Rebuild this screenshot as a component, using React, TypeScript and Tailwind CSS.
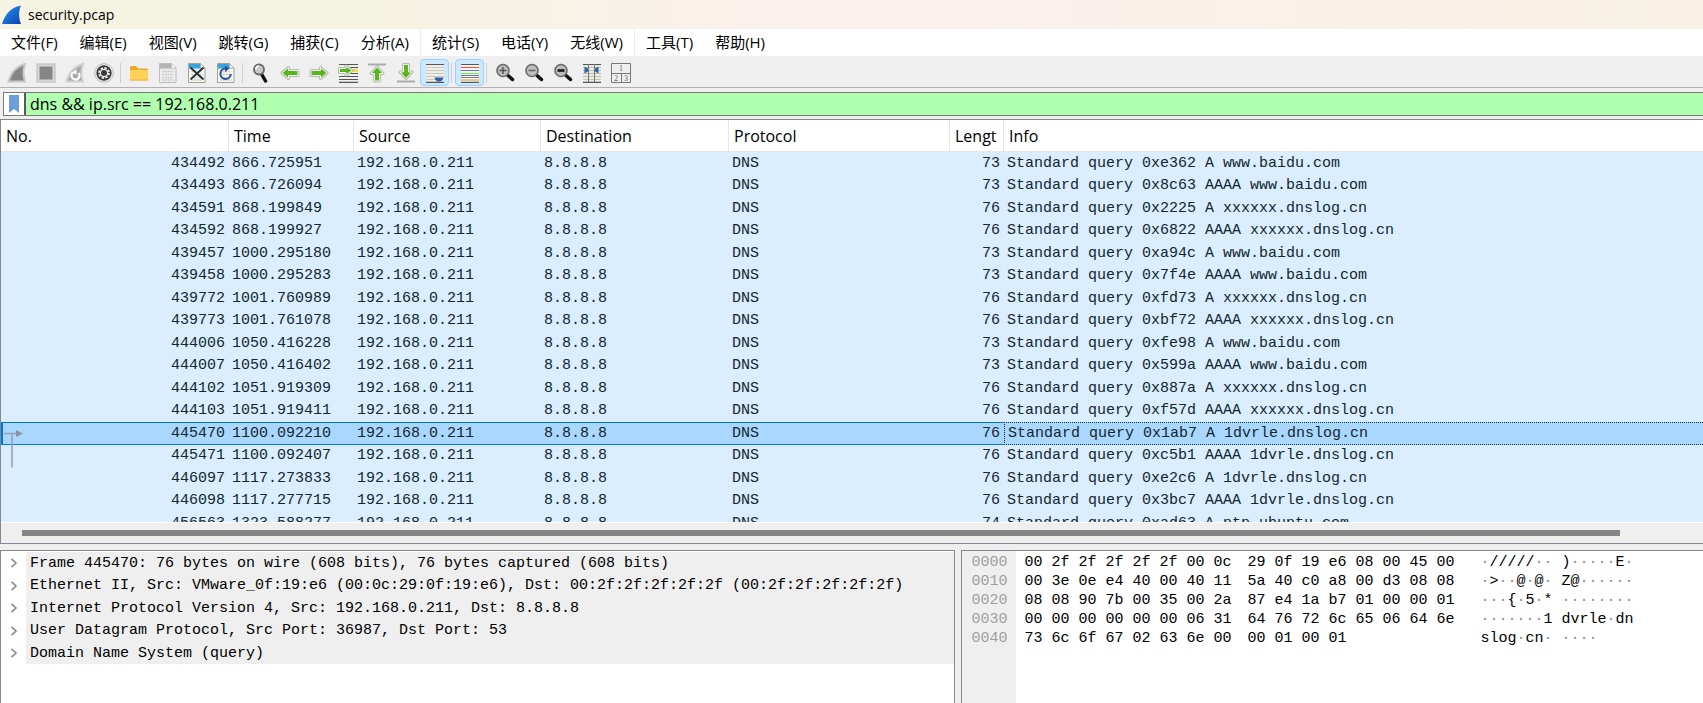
import { ReactNode } from 'react'
import clsx from 'clsx'

interface Packet {
    no: number
    time: string
    length: number
    info: string
}

const MENUS = [
    { label: '文件(F)' },
    { label: '编辑(E)' },
    { label: '视图(V)' },
    { label: '跳转(G)' },
    { label: '捕获(C)' },
    { label: '分析(A)', divider: true },
    { label: '统计(S)' },
    { label: '电话(Y)' },
    { label: '无线(W)', divider: true },
    { label: '工具(T)' },
    { label: '帮助(H)' },
]

const PACKETS: Packet[] = [
    { no: 434492, time: '866.725951', length: 73, info: 'Standard query 0xe362 A www.baidu.com' },
    { no: 434493, time: '866.726094', length: 73, info: 'Standard query 0x8c63 AAAA www.baidu.com' },
    { no: 434591, time: '868.199849', length: 76, info: 'Standard query 0x2225 A xxxxxx.dnslog.cn' },
    { no: 434592, time: '868.199927', length: 76, info: 'Standard query 0x6822 AAAA xxxxxx.dnslog.cn' },
    { no: 439457, time: '1000.295180', length: 73, info: 'Standard query 0xa94c A www.baidu.com' },
    { no: 439458, time: '1000.295283', length: 73, info: 'Standard query 0x7f4e AAAA www.baidu.com' },
    { no: 439772, time: '1001.760989', length: 76, info: 'Standard query 0xfd73 A xxxxxx.dnslog.cn' },
    { no: 439773, time: '1001.761078', length: 76, info: 'Standard query 0xbf72 AAAA xxxxxx.dnslog.cn' },
    { no: 444006, time: '1050.416228', length: 73, info: 'Standard query 0xfe98 A www.baidu.com' },
    { no: 444007, time: '1050.416402', length: 73, info: 'Standard query 0x599a AAAA www.baidu.com' },
    { no: 444102, time: '1051.919309', length: 76, info: 'Standard query 0x887a A xxxxxx.dnslog.cn' },
    { no: 444103, time: '1051.919411', length: 76, info: 'Standard query 0xf57d AAAA xxxxxx.dnslog.cn' },
    { no: 445470, time: '1100.092210', length: 76, info: 'Standard query 0x1ab7 A 1dvrle.dnslog.cn' },
    { no: 445471, time: '1100.092407', length: 76, info: 'Standard query 0xc5b1 AAAA 1dvrle.dnslog.cn' },
    { no: 446097, time: '1117.273833', length: 76, info: 'Standard query 0xe2c6 A 1dvrle.dnslog.cn' },
    { no: 446098, time: '1117.277715', length: 76, info: 'Standard query 0x3bc7 AAAA 1dvrle.dnslog.cn' },
    { no: 456563, time: '1323.588277', length: 74, info: 'Standard query 0xad63 A ntp.ubuntu.com' },
]

const SELECTED = 445470

const COLUMNS = ['No.', 'Time', 'Source', 'Destination', 'Protocol', 'Lengt', 'Info']

const DETAILS = [
    'Frame 445470: 76 bytes on wire (608 bits), 76 bytes captured (608 bits)',
    'Ethernet II, Src: VMware_0f:19:e6 (00:0c:29:0f:19:e6), Dst: 00:2f:2f:2f:2f:2f (00:2f:2f:2f:2f:2f)',
    'Internet Protocol Version 4, Src: 192.168.0.211, Dst: 8.8.8.8',
    'User Datagram Protocol, Src Port: 36987, Dst Port: 53',
    'Domain Name System (query)',
]

const HEX = [
    { offset: '0000', left: '00 2f 2f 2f 2f 2f 00 0c', right: '29 0f 19 e6 08 00 45 00', ascii: '·/////·· )·····E·' },
    { offset: '0010', left: '00 3e 0e e4 40 00 40 11', right: '5a 40 c0 a8 00 d3 08 08', ascii: '·>··@·@· Z@······' },
    { offset: '0020', left: '08 08 90 7b 00 35 00 2a', right: '87 e4 1a b7 01 00 00 01', ascii: '···{·5·* ········' },
    { offset: '0030', left: '00 00 00 00 00 00 06 31', right: '64 76 72 6c 65 06 64 6e', ascii: '·······1 dvrle·dn' },
    { offset: '0040', left: '73 6c 6f 67 02 63 6e 00', right: '00 01 00 01', ascii: 'slog·cn· ····' },
]

function Icon({ children }: { children: ReactNode }) {
    return (
        <svg width="20" height="20" viewBox="0 0 20 20" fill="none" aria-hidden="true">
            {children}
        </svg>
    )
}

function Sheet({ header, edge = '#a2a298', paper = '#f8f8ee' }: { header: string; edge?: string; paper?: string }) {
    return (
        <>
            <path d="M1.500 .5h12l4.500 4.500v14.500h-16.500z" fill={paper} stroke={edge} />
            <path d="M2 1h11.500l3 3v1.500H2z" fill={header} />
            <path d="M13.500 .5v4.500h4.500z" fill="#fff" stroke={edge} strokeWidth=".7" />
            <path d="M4.500 8.500h11M4.500 11.500h11M4.500 14.500h11M4.500 17h11" stroke="#c4c4c0" strokeWidth="1.600" strokeDasharray="1.600 1" />
        </>
    )
}

function Lens({ sign }: { sign: 'plus' | 'minus' | 'reset' }) {
    return (
        <Icon>
            <path d="M13 12.500l4.500 4" stroke="#111" strokeWidth="3.500" strokeLinecap="round" />
            <circle cx="8" cy="7.500" r="6" fill="#bdbdbd" stroke="#6a6a6a" strokeWidth="1.600" />
            {sign === 'plus' && <path d="M8 4v7M4.500 7.500h7" stroke="#555" strokeWidth="1.500" />}
            {sign === 'minus' && <path d="M4.500 7.500h7" stroke="#666" strokeWidth="1.500" />}
            {sign === 'reset' && <path d="M4.500 7.500h7" stroke="#222" strokeWidth="2.800" />}
        </Icon>
    )
}

function Arrow({ d }: { d: string }) {
    return (
        <>
            <path d={d} fill="#b9bcb4" stroke="#b9bcb4" strokeWidth="3" strokeLinejoin="round" />
            <path d={d} fill="#58b51c" stroke="#f2f7ee" strokeWidth="1" strokeLinejoin="round" />
        </>
    )
}

const FIN = 'M1.500 18.500C3.500 12 8 3.500 18 1c-2 5-2 11.500 0 17.500z'

const TOOLS: { label: string; icon?: ReactNode; pressed?: boolean }[] = [
    {
        label: '开始捕获',
        icon: (
            <Icon>
                <path d={FIN} fill="#858585" stroke="#c6c6c6" strokeWidth="2" />
            </Icon>
        ),
    },
    {
        label: '停止捕获',
        icon: (
            <Icon>
                <rect x="1" y="1" width="18" height="18" fill="#d8d8d8" stroke="#b9b9b9" />
                <rect x="3.500" y="3.500" width="13" height="13" fill="#868686" />
            </Icon>
        ),
    },
    {
        label: '重新开始捕获',
        icon: (
            <Icon>
                <path d={FIN} fill="#a9a9a9" stroke="#cfcfcf" strokeWidth="2" />
                <path d="M8 9.500a4 4 0 1 0 5.500 .5" stroke="#fff" strokeWidth="2.200" />
                <path d="M11.500 6.500v5l-4.500-2z" fill="#fff" />
            </Icon>
        ),
    },
    {
        label: '捕获选项',
        icon: (
            <Icon>
                <circle cx="10" cy="10" r="9.300" fill="#f5f5f5" stroke="#b5b5b5" />
                <circle cx="10" cy="10" r="7.700" fill="#3a3a3a" />
                <circle cx="10" cy="10" r="5" stroke="#eee" strokeWidth="1.800" strokeDasharray="2.300 1.600" />
                <circle cx="10" cy="10" r="4.200" fill="#eee" />
                <circle cx="10" cy="10" r="3" fill="#3a3a3a" />
            </Icon>
        ),
    },
    { label: '|' },
    {
        label: '打开',
        icon: (
            <Icon>
                <path d="M1 4.500q0-1.500 1.500-1.500h4.500l2 2.500h8.500q1.500 0 1.500 1.500v10H1z" fill="#e9a926" />
                <path d="M1 7h18v10.500H1z" fill="#ffd257" />
                <path d="M1 17h18" stroke="#eab83d" />
            </Icon>
        ),
    },
    { label: '保存', icon: <Icon><Sheet header="#b4b4b4" edge="#bcbcbc" paper="#ededed" /></Icon> },
    {
        label: '关闭',
        icon: (
            <Icon>
                <Sheet header="#38a6dd" />
                <path d="M4 5l12 11M16 5l-12 11" stroke="#24303a" strokeWidth="1.800" strokeLinecap="round" />
            </Icon>
        ),
    },
    {
        label: '重新加载',
        icon: (
            <Icon>
                <Sheet header="#38a6dd" />
                <path d="M9.500 5.500a5.200 5.200 0 1 0 5.300 5.500" stroke="#2452a0" strokeWidth="2" />
                <path d="M9 2.500l4.500 3L9 9z" fill="#2452a0" />
            </Icon>
        ),
    },
    { label: '|' },
    {
        label: '查找分组',
        icon: (
            <Icon>
                <path d="M10.500 11l4 7" stroke="#111" strokeWidth="3.500" strokeLinecap="round" />
                <circle cx="8" cy="6.500" r="5" fill="#c9c9c9" stroke="#666" strokeWidth="1.800" />
                <path d="M5 6a3 3 0 0 1 3-3" stroke="#fff" strokeWidth="1.500" />
            </Icon>
        ),
    },
    { label: '上一分组', icon: <Icon><Arrow d="M2 10l6.500-5.500v3h9.500v5H8.500v3z" /></Icon> },
    { label: '下一分组', icon: <Icon><Arrow d="M18 10l-6.500-5.500v3H2v5h9.500v3z" /></Icon> },
    {
        label: '转到分组',
        icon: (
            <Icon>
                <path d="M1 1.500h19M12 4.500h8M12 10.500h8M1 13.500h19M1 16.500h19M1 19.300h19" stroke="#555" strokeWidth="1.200" />
                <path d="M13 7.500h7" stroke="#fbdc3b" strokeWidth="3" />
                <Arrow d="M14 7.500l-6-4.500v2.500H1.500v4H8V12z" />
            </Icon>
        ),
    },
    {
        label: '首个分组',
        icon: (
            <Icon>
                <path d="M1 1.500h18" stroke="#aaa" strokeWidth="2" />
                <Arrow d="M10 4l6 6.500h-3.500v7.500h-5v-7.500H4z" />
            </Icon>
        ),
    },
    {
        label: '最新分组',
        icon: (
            <Icon>
                <path d="M1 18.500h18" stroke="#aaa" strokeWidth="2" />
                <Arrow d="M10 15.500L16 9h-3.500V1.500h-5V9H4z" />
            </Icon>
        ),
    },
    {
        label: '自动滚动',
        pressed: true,
        icon: (
            <Icon>
                <path d="M1 1h18v18H1z" fill="#eeeee6" />
                <path d="M1 4.500h18M1 7.500h18M1 10.500h18M1 13.500h18M1 16.500h9" stroke="#c9c9c2" />
                <path d="M1 1.500h18M1 19.300h18" stroke="#555" strokeWidth="1.200" />
                <path d="M9.500 14.500h9q0 2-3 4h-3q-3-2-3-4z" fill="#2f5fa8" />
            </Icon>
        ),
    },
    { label: '|' },
    {
        label: '着色分组',
        pressed: true,
        icon: (
            <Icon>
                <path d="M1 1h18v18H1z" fill="#fafaf4" />
                <path d="M1 1.500h18M1 19.300h18" stroke="#555" strokeWidth="1.200" />
                <path d="M1 4.500h18" stroke="#ee5a50" strokeWidth="1.200" />
                <path d="M1 7.500h18" stroke="#5378ad" />
                <path d="M1 10.500h18" stroke="#83d94c" strokeWidth="1.200" />
                <path d="M1 12.500h18" stroke="#5378ad" />
                <path d="M1 14.500h18" stroke="#8b6bb1" />
                <path d="M1 17h18" stroke="#d3a73b" strokeWidth="1.200" />
            </Icon>
        ),
    },
    { label: '|' },
    { label: '放大', icon: <Lens sign="plus" /> },
    { label: '缩小', icon: <Lens sign="minus" /> },
    { label: '正常大小', icon: <Lens sign="reset" /> },
    {
        label: '调整列宽',
        icon: (
            <Icon>
                <path d="M1 1h18v18H1z" fill="#ecece4" />
                <path d="M1 4.500h18M1 7.500h18M1 10.500h18M1 13.500h18M1 16.500h18" stroke="#bcc3b4" />
                <path d="M1 1.500h18M1 19.300h18" stroke="#555" strokeWidth="1.200" />
                <path d="M6.500 1v18M12.500 1v18" stroke="#777" />
                <path d="M2.500 3.500l3.500 2v3l-3.500 2zM16.500 3.500l-3.500 2v3l3.500 2z" fill="#2f62ae" />
            </Icon>
        ),
    },
    {
        label: '布局',
        icon: (
            <Icon>
                <path d="M.5 .5h19v19H.5zM.5 10.500h19M10.500 10.500v9" stroke="#777" />
                <g className="fill-[#666] font-['Liberation_Serif',serif] text-[8px]">
                    <text x="8" y="8">1</text>
                    <text x="3" y="18">2</text>
                    <text x="13" y="18">3</text>
                </g>
            </Icon>
        ),
    },
]

function Toolbar() {
    return (
        <div role="toolbar" className="flex h-8 items-center border-b border-[#b2b2b2] pt-0.5 pl-0.5">
            {TOOLS.map((tool, i) =>
                tool.icon ? (
                    <button
                        key={i}
                        aria-label={tool.label}
                        aria-pressed={tool.pressed}
                        className={clsx(
                            'flex h-[27px] w-[29px] shrink-0 items-center justify-center',
                            tool.pressed && 'rounded-sm border border-[#99d1ff] bg-[#cce8ff]'
                        )}
                    >
                        {tool.icon}
                    </button>
                ) : (
                    <span key={i} className="mr-[3px] ml-0.5 h-5 w-px shrink-0 bg-[#cfcfcf]" />
                )
            )}
        </div>
    )
}

function PacketRow({ packet }: { packet: Packet }) {
    const selected = packet.no === SELECTED
    const cell = clsx(
        'overflow-hidden pr-1 pl-[3px] leading-5 whitespace-pre',
        selected && 'border-y border-[#0078d7]'
    )

    return (
        <tr className={clsx('h-[23px] even:h-[22px]', selected ? 'bg-[#aad7ff]' : 'bg-[#daeeff]')}>
            <td className={clsx(cell, 'relative text-right', selected && 'overflow-visible border-l-2')}>
                {packet.no}
                {selected && (
                    <svg className="absolute top-0 left-0" width="22" height="46" viewBox="0 0 22 46" fill="none">
                        <path d="M1 10.500h13M9 10.500v34" stroke="#8fa1b0" strokeWidth="1.500" />
                        <path d="M13 7l7 3.500-7 3.500z" fill="#8c959d" />
                    </svg>
                )}
            </td>
            <td className={cell}>{packet.time}</td>
            <td className={cell}>192.168.0.211</td>
            <td className={cell}>8.8.8.8</td>
            <td className={cell}>DNS</td>
            <td className={clsx(cell, 'text-right')}>{packet.length}</td>
            <td className={clsx(cell, selected && 'border-l border-dotted border-l-[#222] border-y-[#00325c]')}>{packet.info}</td>
        </tr>
    )
}

function PacketList() {
    return (
        <section className="flex min-h-0 flex-1 flex-col border-y border-l border-[#828790]">
            <div className="min-h-0 flex-1 overflow-hidden border-b border-white">
                <table className="w-full table-fixed border-separate border-spacing-0 font-['Liberation_Mono',monospace] text-[15px] text-[#12272e]">
                    <colgroup>
                        <col className="w-[228px]" />
                        <col className="w-[125px]" />
                        <col className="w-[187px]" />
                        <col className="w-[188px]" />
                        <col className="w-[221px]" />
                        <col className="w-[54px]" />
                        <col />
                    </colgroup>
                    <thead>
                        <tr className="h-8 bg-white">
                            {COLUMNS.map((name) => (
                                <th
                                    key={name}
                                    className="overflow-hidden border-r border-b border-[#e5e5e5] pl-[5px] text-left font-['Open_Sans',sans-serif] text-base leading-5 font-normal whitespace-nowrap text-black last:border-r-0"
                                >
                                    {name}
                                </th>
                            ))}
                        </tr>
                    </thead>
                    <tbody>
                        {PACKETS.map((packet) => (
                            <PacketRow key={packet.no} packet={packet} />
                        ))}
                    </tbody>
                </table>
            </div>
            <div className="flex h-5 shrink-0 items-center pr-[83px] pl-[21px]">
                <div className="h-1.5 flex-1 bg-[#858585]" />
            </div>
        </section>
    )
}

function DetailTree() {
    return (
        <section className="w-[56.1%] border-t border-r border-l border-[#828790] bg-white pt-px">
            <ul>
                {DETAILS.map((line) => (
                    <li key={line} className="flex h-[22px] items-center even:h-[23px]">
                        <button aria-label="展开" className="flex w-[25px] shrink-0 justify-center">
                            <svg width="8" height="10" viewBox="0 0 8 10" fill="none">
                                <path d="M1.500 .8L6 5 1.500 9.200" stroke="#8a8a8a" strokeWidth="1.600" />
                            </svg>
                        </button>
                        <span className="h-full min-w-0 flex-1 overflow-hidden bg-[#efefef] pl-1 leading-6 whitespace-pre">{line}</span>
                    </li>
                ))}
            </ul>
        </section>
    )
}

function HexDump() {
    return (
        <section className="flex min-w-0 flex-1 border-t border-l border-[#828790] bg-white leading-[19px] whitespace-pre">
            <div className="w-[54px] shrink-0 bg-[#efefef] pt-0.5 pl-[9px] text-[#9f9f9f]">
                {HEX.map((row) => (
                    <div key={row.offset}>{row.offset}</div>
                ))}
            </div>
            <div className="pt-0.5 pl-2">
                {HEX.map((row) => (
                    <div key={row.offset} className="flex">
                        <span className="w-[223px]">{row.left}</span>
                        <span className="w-[233px]">{row.right}</span>
                        <span>
                            {row.ascii.split(/(·+)/).map((part, i) => (
                                <span key={i} className={clsx(part.startsWith('·') && 'text-[#8f8f8f]')}>
                                    {part}
                                </span>
                            ))}
                        </span>
                    </div>
                ))}
            </div>
        </section>
    )
}

export default function App() {
    return (
        <div className="flex h-screen flex-col overflow-hidden bg-[#efefef] font-['Open_Sans','Noto_Sans_CJK_SC',sans-serif] text-black">
            <header className="flex h-[29px] shrink-0 items-center gap-1.5 bg-linear-to-r from-[#f5f3e1] from-20% via-[#fbf0ee] via-50% to-[#f8f1e4] pl-0.5 text-sm">
                <svg width="20" height="20" viewBox="0 0 20 20" aria-hidden="true">
                    <defs>
                        <linearGradient id="fin" x1="0" y1="0" x2="1" y2="1">
                            <stop offset="0" stopColor="#2a9bf5" />
                            <stop offset="1" stopColor="#0b3fb0" />
                        </linearGradient>
                    </defs>
                    <path d="M0 19C2.500 11 8 2 19 .5c-2.500 5.500-2.500 12 0 18.500z" fill="url(#fin)" />
                </svg>
                <h1>security.pcap</h1>
            </header>

            <nav className="flex h-[27px] shrink-0 bg-white text-[15px]">
                {MENUS.map((menu) => (
                    <button
                        key={menu.label}
                        className={clsx('px-[11px] leading-[27px] whitespace-nowrap', menu.divider && 'border-r border-[#ececec]')}
                    >
                        {menu.label}
                    </button>
                ))}
            </nav>

            <Toolbar />

            <div className="mt-1 mb-[3px] ml-[3px] flex h-6 shrink-0 border border-r-0 border-[#7a7a7a]">
                <button aria-label="书签" className="flex w-5 shrink-0 items-center justify-center bg-white">
                    <svg width="10" height="18" viewBox="0 0 10 18">
                        <path d="M0 0h10v18l-5-4-5 4z" fill="#6f9fd8" />
                    </svg>
                </button>
                <input
                    aria-label="显示过滤器"
                    defaultValue="dns && ip.src == 192.168.0.211"
                    className="min-w-0 flex-1 border-l-2 border-[#5a5a5a] bg-[#afffaf] pl-1 text-base leading-5 outline-none"
                />
            </div>

            <PacketList />

            <div className="mt-1.5 flex h-[153px] shrink-0 gap-1.5 font-['Liberation_Mono',monospace] text-[15px]">
                <DetailTree />
                <HexDump />
            </div>
        </div>
    )
}
